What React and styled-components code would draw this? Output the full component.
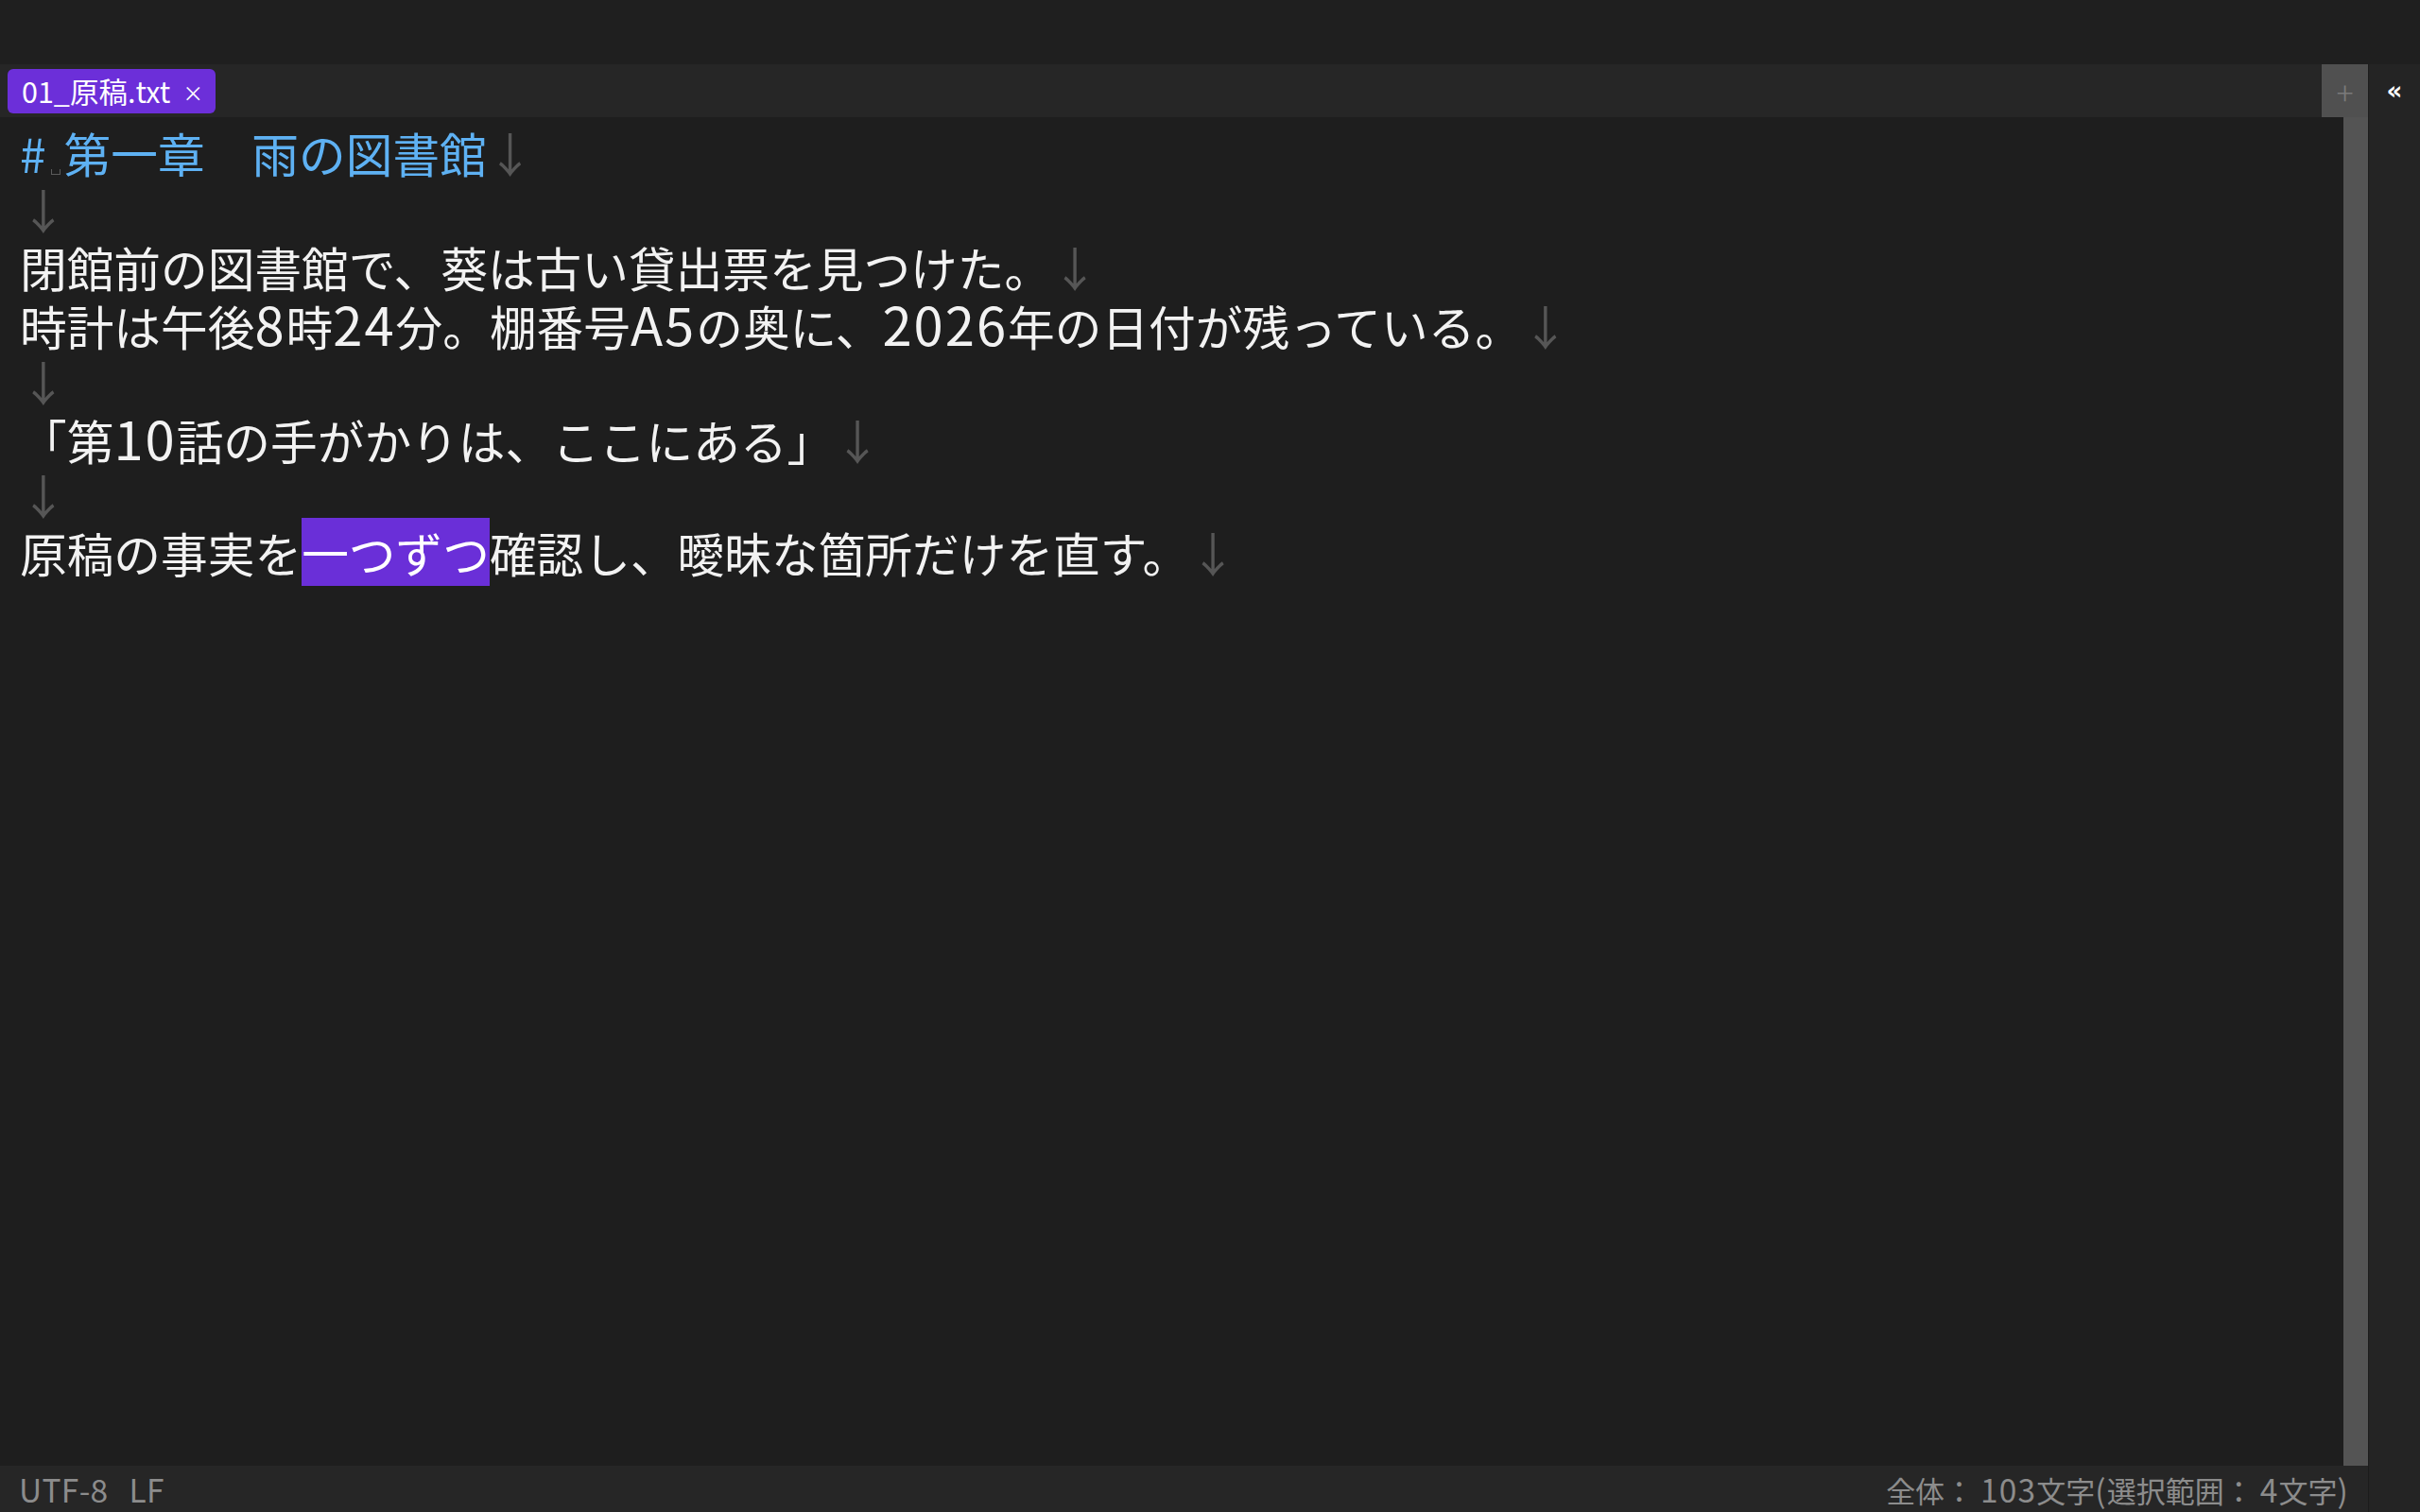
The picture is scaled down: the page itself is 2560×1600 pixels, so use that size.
import React from 'react'
import styled, { createGlobalStyle } from 'styled-components'

const GlobalStyle = createGlobalStyle`
  html, body {
    margin: 0;
    padding: 0;
    background: #1e1e1e;
  }
  #root {
    height: 100vh;
  }
`

const FONT = `"Noto Sans CJK JP", "Noto Sans", sans-serif`

const Window = styled.div`
  display: flex;
  flex-direction: column;
  height: 100vh;
  background: #1e1e1e;
  font-family: ${FONT};
  overflow: hidden;
`

const TitleBar = styled.div`
  height: 68px;
  flex-shrink: 0;
  background: #1f1f1f;
`

const Body = styled.div`
  flex: 1;
  display: flex;
  min-height: 0;
`

const MainColumn = styled.div`
  flex: 1;
  display: flex;
  flex-direction: column;
  min-width: 0;
`

const TabBar = styled.div`
  height: 56px;
  flex-shrink: 0;
  display: flex;
  align-items: center;
  padding-left: 8px;
  background: #262626;
`

const Tab = styled.div`
  display: flex;
  align-items: center;
  height: 47px;
  padding: 0 13px 0 15px;
  gap: 13px;
  border-radius: 6px;
  background: #6c2fd9;
  color: #ffffff;
  font-size: 30.5px;
  line-height: 1;
`

const TabClose = styled.span`
  font-size: 22px;
  line-height: 1;
  margin-top: 2px;
`

const TabSpacer = styled.div`
  flex: 1;
`

const PlusButton = styled.div`
  width: 49px;
  height: 100%;
  display: flex;
  align-items: center;
  justify-content: center;
  background: #505050;
  color: #7a7a7a;
  font-size: 34px;
  font-weight: 300;
`

const EditorRow = styled.div`
  flex: 1;
  display: flex;
  min-height: 0;
`

const Editor = styled.div`
  flex: 1;
  padding: 7px 0 0 21px;
  background: #1e1e1e;
  color: #f2f2f2;
  font-size: 49.7px;
  line-height: 60.4px;
  white-space: pre;
`

const Line = styled.div`
  height: 60.4px;
  color: ${props => (props.heading ? '#5eb1f3' : '#f2f2f2')};
`

// half-width runs render larger and wider in the reference font
const Latin = styled.span`
  font-size: ${props => props.scale || 1.13}em;
  letter-spacing: ${props => (props.tight ? '0.01em' : '0.035em')};
`

const Eol = styled.span`
  color: #565656;
`

const SpaceMark = styled.span`
  display: inline-block;
  width: 8px;
  height: 5px;
  margin: 0 4px 0 5px;
  border: 1.5px solid #5a5a5a;
  border-top: none;
  vertical-align: -2px;
`

const Selection = styled.span`
  background: #6a2fd8;
  color: #ffffff;
`

const Scrollbar = styled.div`
  width: 26px;
  flex-shrink: 0;
  background: #545454;
`

const StatusBar = styled.div`
  height: 49px;
  flex-shrink: 0;
  display: flex;
  align-items: center;
  justify-content: space-between;
  padding: 0 20px 0 20px;
  background: #262626;
  color: #8c8c8c;
  font-size: 31px;
  line-height: 1;
`

const StatusGroup = styled.div`
  display: flex;
  gap: 22px;
`

const Sidebar = styled.div`
  width: 54px;
  flex-shrink: 0;
  display: flex;
  flex-direction: column;
  align-items: center;
  background: #242424;
  border-left: 1px solid #1c1c1c;
`

const CollapseButton = styled.div`
  height: 56px;
  display: flex;
  align-items: center;
  justify-content: center;
  color: #ffffff;
  font-family: "DejaVu Sans", sans-serif;
  font-weight: bold;
  font-size: 26px;
`

const ARROW = '↓'

function mixed(text, scale, tight) {
  return text.split(/([\x21-\x7e]+)/).map((part, i) =>
    /^[\x21-\x7e]+$/.test(part) ? (
      <Latin key={i} scale={scale} tight={tight}>
        {part}
      </Latin>
    ) : (
      part
    )
  )
}

const lines = [
  { heading: true },
  { text: '' },
  { text: '閉館前の図書館で、葵は古い貸出票を見つけた。' },
  { text: '時計は午後8時24分。棚番号A5の奥に、2026年の日付が残っている。' },
  { text: '' },
  { text: '「第10話の手がかりは、ここにある」' },
  { text: '' },
  { selection: true },
]

function EditorLines() {
  return lines.map((line, i) => {
    if (line.heading) {
      return (
        <Line key={i} heading>
          #<SpaceMark />第一章　雨の図書館<Eol>{ARROW}</Eol>
        </Line>
      )
    }
    if (line.selection) {
      return (
        <Line key={i}>
          原稿の事実を<Selection>一つずつ</Selection>確認し、曖昧な箇所だけを直す。<Eol>{ARROW}</Eol>
        </Line>
      )
    }
    return (
      <Line key={i}>
        {mixed(line.text)}
        <Eol>{ARROW}</Eol>
      </Line>
    )
  })
}

export default function App() {
  return (
    <>
      <GlobalStyle />
      <Window>
        <TitleBar />
        <Body>
          <MainColumn>
            <TabBar>
              <Tab>
                <span>01_原稿.txt</span>
                <TabClose>×</TabClose>
              </Tab>
              <TabSpacer />
              <PlusButton>+</PlusButton>
            </TabBar>
            <EditorRow>
              <Editor>
                <EditorLines />
              </Editor>
              <Scrollbar />
            </EditorRow>
            <StatusBar>
              <StatusGroup>
                <span>{mixed('UTF-8', 1.08, true)}</span>
                <span>{mixed('LF', 1.08, true)}</span>
              </StatusGroup>
              <span>{mixed('全体： 103文字(選択範囲： 4文字)', 1.08)}</span>
            </StatusBar>
          </MainColumn>
          <Sidebar>
            <CollapseButton>«</CollapseButton>
          </Sidebar>
        </Body>
      </Window>
    </>
  )
}
